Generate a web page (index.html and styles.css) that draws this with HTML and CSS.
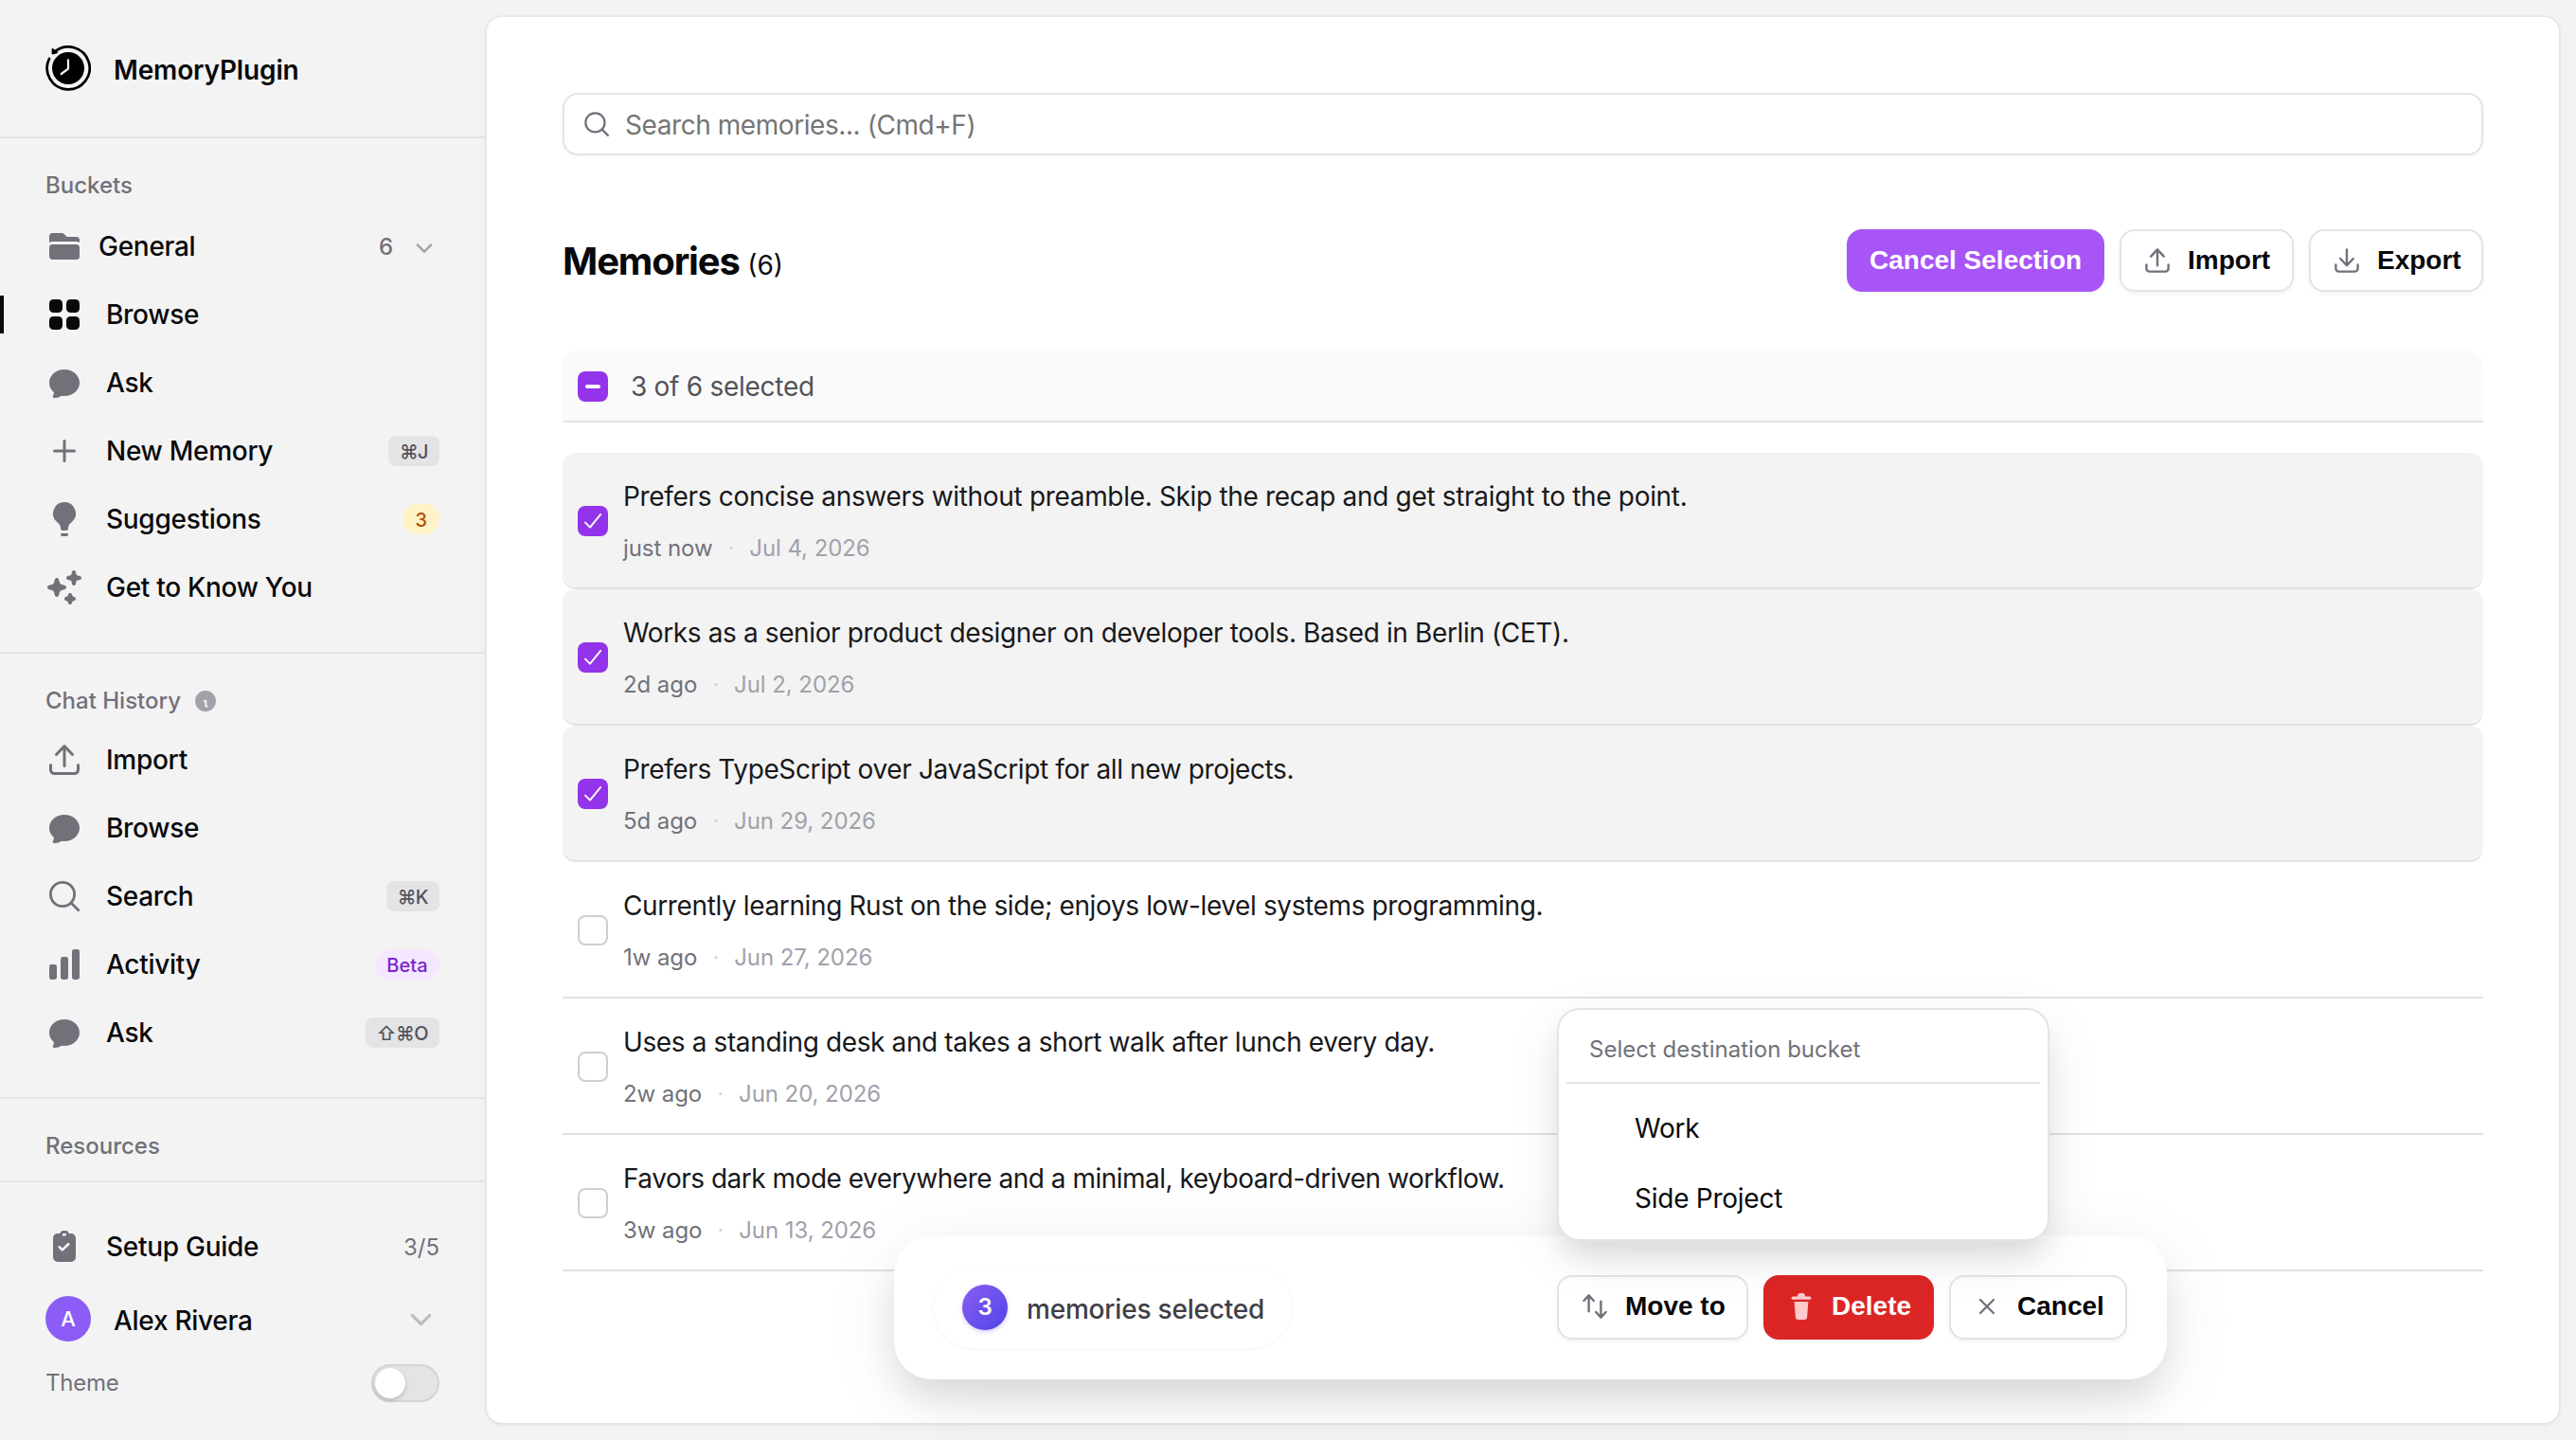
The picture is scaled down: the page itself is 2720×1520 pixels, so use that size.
FILE: index.html
```
<!DOCTYPE html>
<html lang="en">
<head>
    <meta charset="UTF-8">
    <meta name="viewport" content="width=device-width, initial-scale=1.0">
    <title>MemoryPlugin</title>
    <link rel="stylesheet" href="styles.css">
</head>
<body>
    <!-- Icon set -->
    <svg class="sprite" xmlns="http://www.w3.org/2000/svg">
        <symbol id="i-folder" viewBox="0 0 20 20"><path d="M3.75 3A1.75 1.75 0 0 0 2 4.75v3.26a3.235 3.235 0 0 1 1.75-.51h12.5c.644 0 1.245.188 1.75.51V6.75A1.75 1.75 0 0 0 16.25 5h-4.836a.25.25 0 0 1-.177-.073L9.823 3.513A1.75 1.75 0 0 0 8.586 3H3.75ZM3.75 9A1.75 1.75 0 0 0 2 10.75v4.5c0 .966.784 1.75 1.75 1.75h12.5A1.75 1.75 0 0 0 18 15.25v-4.5A1.75 1.75 0 0 0 16.25 9H3.75Z"/></symbol>
        <symbol id="i-grid" viewBox="0 0 20 20"><rect x="2" y="2" width="7" height="7" rx="2.25"/><rect x="11" y="2" width="7" height="7" rx="2.25"/><rect x="2" y="11" width="7" height="7" rx="2.25"/><rect x="11" y="11" width="7" height="7" rx="2.25"/></symbol>
        <symbol id="i-chat" viewBox="0 0 20 20"><path d="M10 3c-4.31 0-8 3.033-8 7 0 2.024.978 3.825 2.499 5.085a3.478 3.478 0 0 1-.522 1.756.75.75 0 0 0 .584 1.143 5.976 5.976 0 0 0 3.936-1.108c.487.082.99.124 1.503.124 4.31 0 8-3.033 8-7s-3.69-7-8-7Z"/></symbol>
        <symbol id="i-plus" viewBox="0 0 20 20"><path d="M10.75 4.75a.75.75 0 0 0-1.5 0v4.5h-4.5a.75.75 0 0 0 0 1.5h4.5v4.5a.75.75 0 0 0 1.5 0v-4.5h4.5a.75.75 0 0 0 0-1.5h-4.5v-4.5Z"/></symbol>
        <symbol id="i-bulb" viewBox="0 0 20 20"><path d="M10 1a6 6 0 0 0-3.815 10.631C7.237 12.5 8 13.443 8 14.456v.644a.75.75 0 0 0 .572.729 6.016 6.016 0 0 0 2.856 0A.75.75 0 0 0 12 15.1v-.644c0-1.013.762-1.957 1.815-2.825A6 6 0 0 0 10 1ZM8.863 17.414a.75.75 0 0 0-.226 1.483 9.066 9.066 0 0 0 2.726 0 .75.75 0 0 0-.226-1.483 7.553 7.553 0 0 1-2.274 0Z"/></symbol>
        <symbol id="i-sparkles" viewBox="0 0 20 20"><path d="M15.98 1.804a1 1 0 0 0-1.96 0l-.24 1.192a1 1 0 0 1-.784.785l-1.192.238a1 1 0 0 0 0 1.962l1.192.238a1 1 0 0 1 .785.785l.238 1.192a1 1 0 0 0 1.962 0l.238-1.192a1 1 0 0 1 .785-.785l1.192-.238a1 1 0 0 0 0-1.962l-1.192-.238a1 1 0 0 1-.785-.785l-.238-1.192ZM6.949 5.684a1 1 0 0 0-1.898 0l-.683 2.051a1 1 0 0 1-.633.633l-2.051.683a1 1 0 0 0 0 1.898l2.051.684a1 1 0 0 1 .633.632l.683 2.051a1 1 0 0 0 1.898 0l.683-2.051a1 1 0 0 1 .633-.633l2.051-.683a1 1 0 0 0 0-1.898l-2.051-.683a1 1 0 0 1-.633-.633L6.95 5.684ZM13.949 13.684a1 1 0 0 0-1.898 0l-.184.551a1 1 0 0 1-.632.633l-.551.183a1 1 0 0 0 0 1.898l.551.183a1 1 0 0 1 .633.633l.183.551a1 1 0 0 0 1.898 0l.184-.551a1 1 0 0 1 .632-.633l.551-.183a1 1 0 0 0 0-1.898l-.551-.184a1 1 0 0 1-.633-.632l-.183-.551Z"/></symbol>
        <symbol id="i-upload" viewBox="0 0 20 20"><path d="M9.25 13.25a.75.75 0 0 0 1.5 0V4.636l2.955 3.129a.75.75 0 0 0 1.09-1.03l-4.25-4.5a.75.75 0 0 0-1.09 0l-4.25 4.5a.75.75 0 1 0 1.09 1.03L9.25 4.636v8.614Z"/><path d="M3.5 12.75a.75.75 0 0 0-1.5 0v2.5A2.75 2.75 0 0 0 4.75 18h10.5A2.75 2.75 0 0 0 18 15.25v-2.5a.75.75 0 0 0-1.5 0v2.5c0 .69-.56 1.25-1.25 1.25H4.75c-.69 0-1.25-.56-1.25-1.25v-2.5Z"/></symbol>
        <symbol id="i-download" viewBox="0 0 20 20"><path d="M10.75 2.75a.75.75 0 0 0-1.5 0v8.614L6.295 8.235a.75.75 0 1 0-1.09 1.03l4.25 4.5a.75.75 0 0 0 1.09 0l4.25-4.5a.75.75 0 0 0-1.09-1.03l-2.955 3.129V2.75Z"/><path d="M3.5 12.75a.75.75 0 0 0-1.5 0v2.5A2.75 2.75 0 0 0 4.75 18h10.5A2.75 2.75 0 0 0 18 15.25v-2.5a.75.75 0 0 0-1.5 0v2.5c0 .69-.56 1.25-1.25 1.25H4.75c-.69 0-1.25-.56-1.25-1.25v-2.5Z"/></symbol>
        <symbol id="i-search" viewBox="0 0 20 20"><circle cx="9" cy="9" r="6.3" fill="none" stroke="currentColor" stroke-width="1.4"/><path d="m13.5 13.5 3.9 3.9" fill="none" stroke="currentColor" stroke-width="1.4" stroke-linecap="round"/></symbol>
        <symbol id="i-bars" viewBox="0 0 20 20"><rect x="2" y="10" width="4" height="8" rx="1.2"/><rect x="8" y="6" width="4" height="12" rx="1.2"/><rect x="14" y="2" width="4" height="16" rx="1.2"/></symbol>
        <symbol id="i-info" viewBox="0 0 16 16"><circle cx="8" cy="8" r="7.3"/><path d="M7.2 7.8h1v3.6M8.2 11.6h.9" fill="none" stroke="#f4f4f4" stroke-width="1.3" stroke-linecap="round" stroke-linejoin="round"/></symbol>
        <symbol id="i-clipboard" viewBox="0 0 20 20"><path fill-rule="evenodd" d="M7.6 3A1.8 1.8 0 0 1 9.2 1.5h1.4A1.8 1.8 0 0 1 12.3 3h1.2A2.5 2.5 0 0 1 16 5.5v10a2.5 2.5 0 0 1-2.5 2.5h-7A2.5 2.5 0 0 1 4 15.5v-10A2.5 2.5 0 0 1 6.5 3ZM9 3v1.2h1.9V3Z"/><path d="m7.3 10.1 1.6 1.6 3.2-3.1" fill="none" stroke="#f4f4f4" stroke-width="1.3" stroke-linecap="round" stroke-linejoin="round"/></symbol>
        <symbol id="i-chevron" viewBox="0 0 20 12"><path d="m2 2 8 8 8-8" fill="none" stroke="currentColor" stroke-width="2.6" stroke-linecap="round" stroke-linejoin="round"/></symbol>
        <symbol id="i-move" viewBox="0 0 20 20"><path d="M2.24 6.8a.75.75 0 0 0 1.06-.04l1.95-2.1v8.59a.75.75 0 0 0 1.5 0V4.66l1.95 2.1a.75.75 0 1 0 1.1-1.02l-3.25-3.5a.75.75 0 0 0-1.1 0L2.2 5.74a.75.75 0 0 0 .04 1.06Zm8 6.4a.75.75 0 0 0-.04 1.06l3.25 3.5a.75.75 0 0 0 1.1 0l3.25-3.5a.75.75 0 1 0-1.1-1.02l-1.95 2.1V6.75a.75.75 0 0 0-1.5 0v8.59l-1.95-2.1a.75.75 0 0 0-1.06-.04Z"/></symbol>
        <symbol id="i-trash" viewBox="0 0 32 32"><path d="M12 5.5C12 3.5 13 2 14.500 2h3C19 2 20 3.5 20 5.5h4.8a1.6 1.6 0 0 1 0 3.3H7.2a1.6 1.6 0 0 1 0-3.3ZM8.600 11h14.800l-1.300 16.500a2.800 2.800 0 0 1-2.800 2.500h-6.600a2.800 2.800 0 0 1-2.800-2.500Z"/></symbol>
        <symbol id="i-x" viewBox="0 0 32 32"><path d="m9 9 14 14M23 9 9 23" fill="none" stroke="currentColor" stroke-width="2.3" stroke-linecap="round"/></symbol>
        <symbol id="i-check" viewBox="0 0 14 14"><path d="m3.500 7.700 2.200 2.200 4.900-6" fill="none" stroke="currentColor" stroke-width=".85" stroke-linecap="round" stroke-linejoin="round"/></symbol>
        <symbol id="i-minus" viewBox="0 0 14 14"><path d="M4.400 7h5.200" fill="none" stroke="currentColor" stroke-width="1.8" stroke-linecap="round"/></symbol>
    </svg>

    <div class="app">
        <aside class="sidebar">
            <div class="brand">
                <svg class="logo" viewBox="0 0 48 48">
                    <path d="M4 14a22.5 22.5 0 1 0 5.5-7.1" fill="none" stroke="#000" stroke-width="2.8" stroke-linecap="round"/>
                    <path d="M7.6 4v4.600l4.400-1.400Z" stroke="#000" stroke-width="2" stroke-linejoin="round"/>
                    <circle cx="24" cy="24" r="17"/>
                    <path d="M24 15.300v9.400L16.700 30" fill="none" stroke="#f4f4f4" stroke-width="2.2" stroke-linecap="round" stroke-linejoin="round"/>
                </svg>
                <span>MemoryPlugin</span>
            </div>

            <nav class="section buckets">
                <h3>Buckets</h3>
                <a class="item bucket"><svg><use href="#i-folder"/></svg><span>General</span><em>6</em><svg class="chev"><use href="#i-chevron"/></svg></a>
                <a class="item active"><svg><use href="#i-grid"/></svg><span>Browse</span></a>
                <a class="item"><svg><use href="#i-chat"/></svg><span>Ask</span></a>
                <a class="item"><svg><use href="#i-plus"/></svg><span>New Memory</span><kbd>⌘J</kbd></a>
                <a class="item"><svg><use href="#i-bulb"/></svg><span>Suggestions</span><b class="pill amber">3</b></a>
                <a class="item"><svg><use href="#i-sparkles"/></svg><span>Get to Know You</span></a>
            </nav>

            <nav class="section">
                <h3>Chat History <svg class="info"><use href="#i-info"/></svg></h3>
                <a class="item"><svg><use href="#i-upload"/></svg><span>Import</span></a>
                <a class="item"><svg><use href="#i-chat"/></svg><span>Browse</span></a>
                <a class="item"><svg><use href="#i-search"/></svg><span>Search</span><kbd>⌘K</kbd></a>
                <a class="item"><svg><use href="#i-bars"/></svg><span>Activity</span><b class="pill purple">Beta</b></a>
                <a class="item"><svg><use href="#i-chat"/></svg><span>Ask</span><kbd>⇧⌘O</kbd></a>
            </nav>

            <div class="section resources">
                <h3>Resources</h3>
            </div>

            <div class="footer">
                <a class="item"><svg><use href="#i-clipboard"/></svg><span>Setup Guide</span><em>3/5</em></a>
                <div class="account">
                    <div class="avatar">A</div>
                    <span>Alex Rivera</span>
                    <svg class="chev"><use href="#i-chevron"/></svg>
                </div>
                <div class="theme">
                    <span>Theme</span>
                    <div class="toggle"><i></i></div>
                </div>
            </div>
        </aside>

        <main class="panel">
            <div class="search">
                <svg><use href="#i-search"/></svg>
                <span>Search memories... (Cmd+F)</span>
            </div>

            <div class="heading">
                <h1>Memories <small>(6)</small></h1>
                <button class="btn primary">Cancel Selection</button>
                <button class="btn import"><svg><use href="#i-upload"/></svg>Import</button>
                <button class="btn export"><svg><use href="#i-download"/></svg>Export</button>
            </div>

            <div class="select-bar">
                <div class="box on"><svg><use href="#i-minus"/></svg></div>
                <span>3 of 6 selected</span>
            </div>

            <div class="list">
                <div class="memory selected">
                    <div class="box on"><svg><use href="#i-check"/></svg></div>
                    <div>
                        <p>Prefers concise answers without preamble. Skip the recap and get straight to the point.</p>
                        <div class="meta"><span>just now</span><i>·</i><time>Jul 4, 2026</time></div>
                    </div>
                </div>
                <div class="memory selected">
                    <div class="box on"><svg><use href="#i-check"/></svg></div>
                    <div>
                        <p>Works as a senior product designer on developer tools. Based in Berlin (CET).</p>
                        <div class="meta"><span>2d ago</span><i>·</i><time>Jul 2, 2026</time></div>
                    </div>
                </div>
                <div class="memory selected">
                    <div class="box on"><svg><use href="#i-check"/></svg></div>
                    <div>
                        <p>Prefers TypeScript over JavaScript for all new projects.</p>
                        <div class="meta"><span>5d ago</span><i>·</i><time>Jun 29, 2026</time></div>
                    </div>
                </div>
                <div class="memory">
                    <div class="box"></div>
                    <div>
                        <p>Currently learning Rust on the side; enjoys low-level systems programming.</p>
                        <div class="meta"><span>1w ago</span><i>·</i><time>Jun 27, 2026</time></div>
                    </div>
                </div>
                <div class="memory">
                    <div class="box"></div>
                    <div>
                        <p>Uses a standing desk and takes a short walk after lunch every day.</p>
                        <div class="meta"><span>2w ago</span><i>·</i><time>Jun 20, 2026</time></div>
                    </div>
                </div>
                <div class="memory">
                    <div class="box"></div>
                    <div>
                        <p>Favors dark mode everywhere and a minimal, keyboard-driven workflow.</p>
                        <div class="meta"><span>3w ago</span><i>·</i><time>Jun 13, 2026</time></div>
                    </div>
                </div>
            </div>
        </main>

        <!-- Bulk actions -->
        <div class="bulk">
            <div class="count"><b>3</b><span>memories selected</span></div>
            <div class="move-wrap">
                <button class="btn move"><svg><use href="#i-move"/></svg>Move to</button>
                <div class="menu">
                    <div class="menu-title">Select destination bucket</div>
                    <a>Work</a>
                    <a>Side Project</a>
                </div>
            </div>
            <button class="btn delete"><svg><use href="#i-trash"/></svg>Delete</button>
            <button class="btn cancel"><svg><use href="#i-x"/></svg>Cancel</button>
        </div>
    </div>
</body>
</html>
```
FILE: styles.css
```
* {
    box-sizing: border-box;
}
body {
    margin: 0;
    background: #f3f3f3;
    color: #09090b;
    font-family: Inter, "Liberation Sans", sans-serif;
    font-size: 28px;
}
h1, h3, p {
    margin: 0;
}
svg {
    display: block;
    flex: none;
    fill: currentColor;
}
em, i {
    font-style: normal;
}
.sprite {
    position: absolute;
    width: 0;
    height: 0;
}
.app {
    position: relative;
    display: flex;
    width: 2720px;
    height: 1520px;
    overflow: hidden;
}

/* Sidebar */
.sidebar {
    display: flex;
    flex-direction: column;
    flex: none;
    width: 512px;
    margin-right: 2px;
}
.brand {
    display: flex;
    align-items: center;
    gap: 24px;
    height: 146px;
    padding: 0 48px;
    border-bottom: 2px solid #e4e4e5;
    font-weight: 600;
    letter-spacing: -0.005em;
}
.brand span {
    margin-top: 4px;
}
.logo {
    width: 48px;
    height: 48px;
    fill: #000;
}
.section {
    padding: 32px 0;
    border-bottom: 2px solid #e4e4e5;
}
.section h3 {
    display: flex;
    align-items: center;
    gap: 14px;
    height: 35px;
    margin-bottom: 9px;
    padding-left: 48px;
    color: #71717a;
    font-size: 24px;
    font-weight: 500;
}
.section.buckets h3 {
    margin-bottom: 11px;
}
.info {
    width: 24px;
    height: 24px;
    color: #a1a1aa;
}
.item {
    display: flex;
    align-items: center;
    height: 72px;
    padding: 0 48px;
    font-weight: 500;
    letter-spacing: -0.01em;
}
.item svg {
    width: 40px;
    height: 40px;
    margin-right: 24px;
    color: #71717a;
}
.item span, .account span {
    flex: 1;
}
.item em {
    color: #71717a;
    font-size: 24px;
    font-weight: 400;
    letter-spacing: 0;
}
.item.bucket {
    padding-right: 55px;
}
.item.bucket svg {
    margin-right: 16px;
}
.item.bucket .chev {
    width: 18px;
    height: 12px;
    margin: 3px 0 0 24px;
    color: #a1a1aa;
}
.item.bucket em {
    font-weight: 500;
}
.item.active {
    background: linear-gradient(#09090b, #09090b) 0 50% / 4px 40px no-repeat;
}
.item.active svg {
    color: #09090b;
}
kbd, .pill {
    height: 32px;
    padding: 0 12px;
    border-radius: 8px;
    background: #e4e4e6;
    color: #52525b;
    font-family: inherit;
    font-size: 20px;
    font-weight: 500;
    line-height: 34px;
    letter-spacing: 0;
}
kbd {
    letter-spacing: -0.03em;
}
.pill {
    border-radius: 16px;
}
.amber {
    padding: 0 13px;
    background: #fef3c7;
    color: #b45309;
}
.purple {
    padding: 0 12.5px;
    background: #f3e8ff;
    color: #7e22ce;
}
.resources {
    padding-bottom: 10px;
}
.footer {
    padding-top: 32px;
}
.account {
    display: flex;
    align-items: center;
    gap: 24px;
    height: 80px;
    padding: 0 55px 0 48px;
    font-weight: 500;
    letter-spacing: -0.01em;
}
.account span {
    margin-top: 4px;
}
.account .chev {
    width: 23px;
    height: 14px;
    margin: 2px 1px 0 0;
    color: #bcbcc0;
}
.avatar {
    width: 48px;
    height: 48px;
    border-radius: 50%;
    background: #8b5cf6;
    color: #fff;
    font-size: 22px;
    line-height: 49px;
    text-align: center;
}
.theme {
    display: flex;
    align-items: center;
    justify-content: space-between;
    height: 40px;
    margin-top: 8px;
    padding: 0 48px;
    color: #71717a;
    font-size: 24px;
    letter-spacing: -0.01em;
}
.theme span {
    margin-bottom: 1px;
}
.toggle {
    width: 72px;
    height: 40px;
    padding: 2px;
    border: 2px solid #d4d4d6;
    border-radius: 20px;
    background: #e4e4e6;
}
.toggle i {
    display: block;
    width: 32px;
    height: 32px;
    border-radius: 50%;
    background: #fff;
    box-shadow: 0 2px 4px rgba(0, 0, 0, 0.2);
}

/* Main panel */
.panel {
    flex: 1;
    margin: 18px 18px 18px 0;
    padding: 80px;
    border-radius: 16px;
    background: #fff;
    box-shadow: 0 0 0 2px rgba(9, 9, 11, 0.03), 0 2px 6px rgba(0, 0, 0, 0.05);
}
.search {
    display: flex;
    align-items: center;
    gap: 14px;
    height: 66px;
    padding-left: 18px;
    border: 2px solid #e4e4e5;
    border-radius: 16px;
    box-shadow: 0 2px 4px rgba(0, 0, 0, 0.04);
    color: #757575;
    letter-spacing: -0.0155em;
}
.search svg {
    width: 32px;
    height: 32px;
    color: #71717a;
}
.search span {
    margin-top: 2px;
}
.heading {
    display: flex;
    align-items: center;
    gap: 16px;
    height: 66px;
    margin: 78px 0 62px;
}
h1 {
    flex: 1;
    margin-top: 5px;
    font-size: 40px;
    font-weight: 700;
    line-height: 48px;
    letter-spacing: -0.028em;
}
h1 small {
    font-size: 28px;
    font-weight: 400;
    letter-spacing: 0;
}
.btn {
    display: flex;
    align-items: center;
    gap: 16px;
    height: 66px;
    padding: 0 0 1px 22px;
    border: 2px solid #e4e4e5;
    border-radius: 16px;
    background: #fff;
    box-shadow: 0 2px 4px rgba(0, 0, 0, 0.05);
    color: #09090b;
    font-family: "Liberation Sans", Arial, sans-serif;
    font-size: 28px;
    font-weight: 700;
    white-space: nowrap;
}
.btn svg {
    width: 32px;
    height: 32px;
    color: #71717a;
}
.btn.primary {
    width: 272px;
    border-color: #a855f7;
    background: #a855f7;
    color: #fff;
}
.btn.import, .btn.export {
    width: 184px;
}
.select-bar {
    display: flex;
    align-items: center;
    gap: 24px;
    height: 76px;
    padding: 2px 0 0 16px;
    border-bottom: 2px solid #e4e4e5;
    border-radius: 16px 16px 0 0;
    background: #fafafa;
    color: #52525b;
    letter-spacing: -0.01em;
}
.box {
    flex: none;
    width: 32px;
    height: 32px;
    border: 2px solid #cfcfd1;
    border-radius: 8px;
    background: #fff;
}
.box.on {
    border: 0;
    background: #9333ea;
    color: #fff;
}
.box svg {
    width: 32px;
    height: 32px;
}
.list {
    margin-top: 32px;
}
.memory {
    display: flex;
    gap: 16px;
    height: 144px;
    padding: 24px 16px 0;
    border-bottom: 2px solid #e2e2e3;
}
.memory .box {
    margin-top: 32px;
}
.memory.selected {
    border-radius: 14px;
    background: #f3f3f3;
}
.memory p {
    color: #18181b;
    line-height: 45px;
    letter-spacing: -0.0135em;
}
.memory:first-child p {
    letter-spacing: -0.0115em;
}
.memory:last-child p {
    letter-spacing: -0.0175em;
}
.meta {
    display: flex;
    gap: 16px;
    margin-top: 11px;
    color: #71717a;
    font-size: 24px;
    line-height: 41px;
    letter-spacing: -0.003em;
}
.meta i {
    color: #d4d4d8;
}
.meta time {
    color: #a1a1aa;
}

/* Bulk action bar */
.bulk {
    position: absolute;
    left: 944px;
    top: 1304px;
    display: flex;
    align-items: center;
    width: 1344px;
    height: 152px;
    padding: 0 42px;
    border-radius: 40px;
    background: #fff;
    box-shadow: 0 16px 80px rgba(0, 0, 0, 0.08), 0 24px 40px -6px rgba(0, 0, 0, 0.11);
}
.bulk .btn {
    height: 68px;
    padding-bottom: 3px;
}
.count {
    display: flex;
    align-items: center;
    gap: 20px;
    width: 378px;
    height: 86px;
    margin-right: auto;
    padding-left: 30px;
    border-radius: 43px;
    box-shadow: 0 1px 4px rgba(0, 0, 0, 0.05);
    color: #3f3f46;
    font-weight: 500;
    letter-spacing: -0.007em;
}
.count b {
    width: 48px;
    height: 48px;
    border-radius: 50%;
    background: linear-gradient(135deg, #8b5cf6, #4f46e5);
    box-shadow: 0 2px 4px rgba(79, 70, 229, 0.25);
    color: #fff;
    font-size: 24px;
    font-weight: 600;
    line-height: 48px;
    text-align: center;
}
.count span {
    margin-top: 4px;
}
.move-wrap {
    position: relative;
}
.btn.move {
    width: 202px;
}
.btn.delete {
    width: 180px;
    margin: 0 16px;
    border-color: #dc2626;
    background: #dc2626;
    color: #fff;
}
.btn.delete svg {
    color: #fecaca;
}
.btn.cancel {
    width: 188px;
}
.menu {
    position: absolute;
    left: 0;
    bottom: 104px;
    width: 520px;
    height: 246px;
    padding: 0 8px;
    border: 2px solid #e4e4e5;
    border-radius: 24px;
    background: #fff;
    box-shadow: 0 16px 60px rgba(0, 0, 0, 0.08), 0 20px 30px -6px rgba(0, 0, 0, 0.1);
}
.menu-title {
    height: 78px;
    margin-bottom: 10px;
    padding-left: 24px;
    border-bottom: 2px solid #e4e4e5;
    color: #71717a;
    font-size: 24px;
    line-height: 83px;
}
.menu a {
    display: block;
    padding-left: 72px;
    line-height: 74px;
    letter-spacing: -0.009em;
}
```
